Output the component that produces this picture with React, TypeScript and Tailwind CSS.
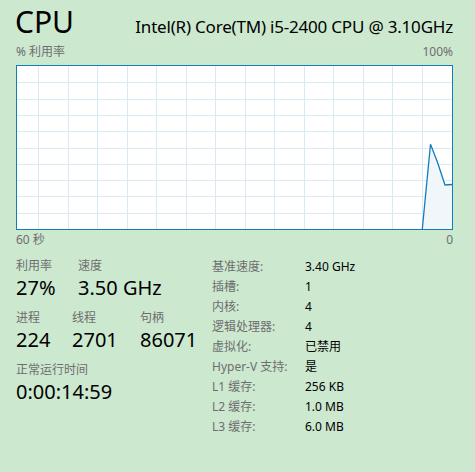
const font = "font-['Segoe_UI','Noto_Sans','Noto_Sans_CJK_SC',sans-serif]";

const vLines = Array.from({ length: 14 }, (_, i) => Math.round(21 + i * 29.54) + 0.5);
const hLines = Array.from({ length: 9 }, (_, i) => Math.round(16.3 * (i + 1)) + 0.5);

function UsageChart() {
  return (
    <div className="h-[165px] w-full border border-[#117dbb] bg-white">
      <svg width="435" height="163" viewBox="0 0 435 163" className="block">
        {vLines.map((x) => (
          <line key={"v" + x} x1={x} x2={x} y1={0} y2={163} stroke="#d9eaf4" strokeWidth="1" />
        ))}
        {hLines.map((y) => (
          <line key={"h" + y} x1={0} x2={435} y1={y} y2={y} stroke="#d9eaf4" strokeWidth="1" />
        ))}
        <polygon points="405.3,163 413.5,78.3 420.3,95.7 428,119 435,118.5 435,163" fill="#f1f6fa" />
        <polyline points="405.3,163 413.5,78.3 420.3,95.7 428,119 435,118.5" fill="none" stroke="#117dbb" strokeWidth="1.3" />
      </svg>
    </div>
  );
}

function Stat({ label, value, className }: { label: string; value: string; className?: string }) {
  return (
    <div className={"flex flex-col " + (className ?? "")}>
      <span className="text-[12px] leading-[16px] text-[#6e6e6e]">{label}</span>
      <span className="text-[20px] leading-[28px] text-black">{value}</span>
    </div>
  );
}

const details: [string, string][] = [
  ["基准速度:", "3.40 GHz"],
  ["插槽:", "1"],
  ["内核:", "4"],
  ["逻辑处理器:", "4"],
  ["虚拟化:", "已禁用"],
  ["Hyper-V 支持:", "是"],
  ["L1 缓存:", "256 KB"],
  ["L2 缓存:", "1.0 MB"],
  ["L3 缓存:", "6.0 MB"],
];

export default function App() {
  return (
    <div className={"w-[475px] h-[472px] bg-[#cce8cf] pl-4 pr-[22px] pt-[2px] " + font}>
      <div className="flex items-baseline justify-between">
        <span className="text-[30px] leading-[40px] text-black -ml-[1px]">CPU</span>
        <span className="text-[17px] leading-[24px] tracking-[-0.2px] text-black">Intel(R) Core(TM) i5-2400 CPU @ 3.10GHz</span>
      </div>
      <div className="mt-[2px] flex justify-between text-[12px] leading-[16px] text-[#6e6e6e]">
        <span>% 利用率</span>
        <span>100%</span>
      </div>
      <div className="mt-[5px]">
        <UsageChart />
      </div>
      <div className="mt-[2px] flex justify-between text-[12px] leading-[16px] text-[#6e6e6e]">
        <span>60 秒</span>
        <span>0</span>
      </div>
      <div className="mt-[9px] flex">
        <div className="mt-[1px] flex w-[196px] flex-col">
          <div className="flex">
            <Stat label="利用率" value="27%" className="w-[62px]" />
            <Stat label="速度" value="3.50 GHz" />
          </div>
          <div className="mt-2 flex">
            <Stat label="进程" value="224" className="w-[56px]" />
            <Stat label="线程" value="2701" className="w-[68px]" />
            <Stat label="句柄" value="86071" />
          </div>
          <div className="mt-2 flex">
            <Stat label="正常运行时间" value="0:00:14:59" />
          </div>
        </div>
        <div className="flex flex-col text-[12px]">
          {details.map(([k, v]) => (
            <div key={k} className="flex h-[20px] items-center">
              <span className="w-[93px] text-[#6e6e6e]">{k}</span>
              <span className="text-black">{v}</span>
            </div>
          ))}
        </div>
      </div>
    </div>
  );
}
